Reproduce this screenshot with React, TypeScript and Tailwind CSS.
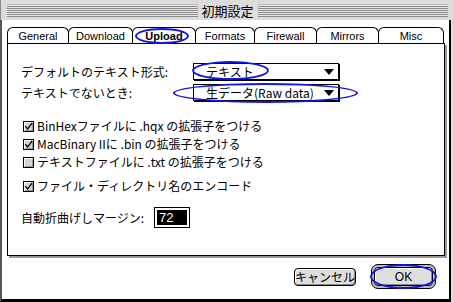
import React from "react";

const tabs = [
  { label: "General", w: "w-[62px]" },
  { label: "Download", w: "w-[65px]" },
  { label: "Upload", w: "w-[64px]", active: true },
  { label: "Formats", w: "w-[60px]" },
  { label: "Firewall", w: "w-[63px]" },
  { label: "Mirrors", w: "w-[63px]" },
  { label: "Misc", w: "w-[66px]" },
];

const checks = [
  { label: "BinHexファイルに .hqx の拡張子をつける", on: true },
  { label: "MacBinary IIに .bin の拡張子をつける", on: true },
  { label: "テキストファイルに .txt の拡張子をつける", on: false },
];

const jp = "font-['Noto_Sans_CJK_JP','Noto_Sans',sans-serif]";

function Stripes() {
  return (
    <div className="flex-1 h-[13px] border-t border-[#bbb] bg-[repeating-linear-gradient(to_bottom,#e6e6e6_0px,#e6e6e6_1px,#8a8a8a_1px,#8a8a8a_2px)]" />
  );
}

function Arrow() {
  return (
    <svg width="10" height="6" viewBox="0 0 10 6" className="shrink-0">
      <path d="M0 0 H10 L5 6 Z" fill="#000" />
    </svg>
  );
}

function Popup({ value }: { value: string }) {
  return (
    <div className="w-[146px] h-[17px] border border-black bg-white shadow-[1px_1px_0_#000] flex items-center pl-[12px] pr-[4px]">
      <span className="flex-1 text-[12px] leading-none whitespace-nowrap">{value}</span>
      <Arrow />
    </div>
  );
}

function CheckBox({ on }: { on: boolean }) {
  return (
    <div className="w-[11px] h-[11px] border border-black bg-[#d4d4d4] shadow-[inset_1px_1px_0_#fff,inset_-1px_-1px_0_#999] flex items-center justify-center shrink-0">
      {on && (
        <svg width="11" height="11" viewBox="0 0 11 11">
          <path d="M1.5 5 L4.5 8.5 L10 1" stroke="#000" strokeWidth="1.6" fill="none" />
        </svg>
      )}
    </div>
  );
}

export default function App() {
  return (
    <div className={`relative w-[453px] h-[302px] bg-[#dcdcdc] flex flex-col ${jp} text-black`}>
      {/* title bar */}
      <div className="h-[20px] flex items-center pl-[6px] pr-[5px] border-l border-[#888]">
        <Stripes />
        <span className="px-[4px] text-[13px] leading-none">初期設定</span>
        <Stripes />
      </div>

      {/* window body */}
      <div className="w-[451px] flex-1 flex flex-col bg-white border-l-2 border-r-2 border-b-[3px] border-l-[#555] border-r-black border-b-black pt-[7px] pl-[5px] pr-[4px]">
        {/* tabs */}
        <div className="flex h-[16px] font-['Liberation_Sans',sans-serif]">
          {tabs.map((t, i) => (
            <div
              key={t.label}
              className={`${t.w} ${i > 0 ? "-ml-px" : ""} h-[17px] border-t border-l border-r border-black rounded-t-[6px] bg-white flex items-center justify-center text-[11px] leading-none ${t.active ? "font-bold" : ""}`}
            >
              {t.label}
            </div>
          ))}
        </div>

        {/* panel */}
        <div className="h-[213px] w-[438px] border border-black bg-white shadow-[2px_2px_0_#999] pl-[13px] pt-[19px] flex flex-col text-[12px]">
          <div className="flex items-center h-[17px]">
            <span className="w-[172px] leading-none">デフォルトのテキスト形式:</span>
            <Popup value="テキスト" />
          </div>
          <div className="flex items-center h-[17px] mt-[4px]">
            <span className="w-[172px] leading-none">テキストでないとき:</span>
            <Popup value="生データ(Raw data)" />
          </div>

          <div className="flex flex-col mt-[16px]">
            {checks.map((c) => (
              <div key={c.label} className="flex items-center h-[18px] gap-[3px] pl-[2px]">
                <CheckBox on={c.on} />
                <span className="leading-none whitespace-nowrap">{c.label}</span>
              </div>
            ))}
            <div className="flex items-center h-[18px] gap-[3px] pl-[2px] mt-[6px]">
              <CheckBox on />
              <span className="leading-none whitespace-nowrap">ファイル・ディレクトリ名のエンコード</span>
            </div>
          </div>

          <div className="flex items-center mt-[12px] h-[21px]">
            <span className="w-[133px] leading-none">自動折曲げしマージン:</span>
            <div className="w-[36px] h-[21px] border border-black bg-white p-[2px]">
              <div className="w-full h-full bg-black text-white text-[13px] leading-none flex items-center pl-[2px] font-['Liberation_Sans',sans-serif]">
                72
              </div>
            </div>
          </div>
        </div>

        {/* buttons */}
        <div className="flex justify-end items-center mt-[8px] h-[25px] pr-[9px] gap-[15px]">
          <button className="w-[62px] h-[18px] border border-black rounded-[4px] bg-[#dedede] shadow-[inset_1px_1px_0_#fff,inset_-1px_-1px_0_#888] text-[12px] leading-none flex items-center justify-center">
            キャンセル
          </button>
          <div className="w-[65px] h-[25px] border border-black rounded-[7px] bg-[#bdbdbd] p-[2px] flex">
            <button className="flex-1 border border-black rounded-[4px] bg-[#dedede] shadow-[inset_1px_1px_0_#fff,inset_-1px_-1px_0_#888] text-[12px] leading-none flex items-center justify-center font-['Liberation_Sans',sans-serif]">
              OK
            </button>
          </div>
        </div>
      </div>

      {/* annotation ellipses */}
      <span className="absolute left-[135px] top-[28px] w-[54px] h-[16px] rounded-[50%] border-2 border-[#1414e6]" />
      <span className="absolute left-[192px] top-[61px] w-[77px] h-[19px] rounded-[50%] border-2 border-[#1414e6]" />
      <span className="absolute left-[173px] top-[83px] w-[185px] h-[20px] rounded-[50%] border-2 border-[#1414e6]" />
      <span className="absolute left-[370px] top-[264px] w-[67px] h-[25px] rounded-[50%] border-2 border-[#1414e6]" />
    </div>
  );
}
